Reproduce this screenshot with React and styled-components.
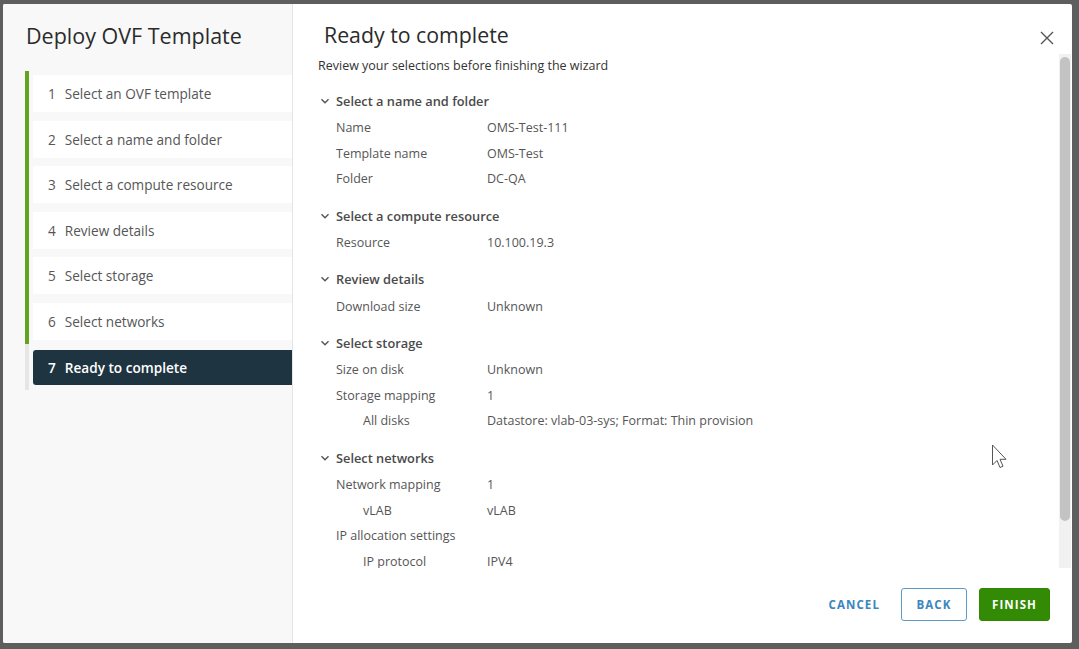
import React from "react";
import styled, { createGlobalStyle } from "styled-components";

const Global = createGlobalStyle`
  html, body { margin: 0; padding: 0; background: #5e5e5e; }
  body { font-family: "Open Sans", "Noto Sans", sans-serif; }
  * { box-sizing: border-box; }
`;

const Page = styled.div`
  width: 1079px;
  height: 649px;
  padding: 4px 7px 6px 3px;
  background: #5e5e5e;
`;

const Modal = styled.div`
  position: relative;
  display: flex;
  width: 100%;
  height: 100%;
  background: #fff;
  border-radius: 2px;
  overflow: hidden;
`;

const Sidebar = styled.aside`
  width: 290px;
  flex: none;
  background: #f8f8f8;
  border-right: 1px solid #e4e4e4;
  padding: 0 0 0 22px;
`;

const SideTitle = styled.h1`
  margin: 0;
  height: 67px;
  padding: 18px 0 0 1px;
  font-size: 21.5px;
  line-height: 28px;
  font-weight: 400;
  color: #2b2b2b;
`;

const StepList = styled.ol`
  list-style: none;
  margin: 0;
  padding: 0;
`;

const StepItem = styled.li`
  display: flex;
  align-items: flex-start;
  height: 45.5px;
  gap: 4px;
`;

const StepBar = styled.span`
  width: 4px;
  align-self: stretch;
  background: ${(p) => (p.$done ? "#62a420" : "#e6e6e6")};
`;

const StepBox = styled.div`
  flex: 1;
  margin-top: ${(p) => (p.$active ? "6px" : "4px")};
  height: ${(p) => (p.$active ? "35px" : "37px")};
  display: flex;
  align-items: center;
  padding-left: 15px;
  gap: 9px;
  background: ${(p) => (p.$active ? "#1f3441" : "#ffffff")};
  border-radius: ${(p) => (p.$active ? "3px 0 0 3px" : "0")};
  color: ${(p) => (p.$active ? "#ffffff" : "#565656")};
  font-size: 13.6px;
  font-weight: ${(p) => (p.$active ? 600 : 400)};
`;

const Main = styled.section`
  flex: 1;
  display: flex;
  flex-direction: column;
  min-width: 0;
`;

const Header = styled.header`
  height: 50px;
  flex: none;
  display: flex;
  align-items: flex-start;
  justify-content: space-between;
  padding: 17px 17px 0 31px;
`;

const Title = styled.h2`
  margin: 0;
  font-size: 21.3px;
  line-height: 28px;
  font-weight: 400;
  color: #2b2b2b;
`;

const CloseButton = styled.button`
  border: 0;
  background: none;
  padding: 0;
  margin-top: 9px;
  width: 16px;
  height: 16px;
  display: flex;
  align-items: center;
  justify-content: center;
`;

const ScrollArea = styled.div`
  flex: 1;
  display: flex;
  min-height: 0;
`;

const ScrollContent = styled.div`
  flex: 1;
  overflow: hidden;
  padding: 4px 0 0 25px;
`;

const Track = styled.div`
  width: 12px;
  flex: none;
  margin-right: 1px;
  background: #f1f1f1;
  padding: 3px 1px 0 1px;
`;

const Thumb = styled.div`
  height: 464px;
  border-radius: 5px;
  background: #c3c3c3;
`;

const Subtitle = styled.p`
  margin: 0 0 15px;
  font-size: 12.5px;
  line-height: 16px;
  color: #333;
`;

const Section = styled.div`
  margin-bottom: 12px;
`;

const SectionHead = styled.div`
  display: flex;
  align-items: center;
  gap: 6px;
  height: 24px;
  margin-bottom: 2px;
  padding-left: 2px;
  font-size: 12.8px;
  font-weight: 600;
  color: #4a4a4a;
`;

const Row = styled.div`
  display: grid;
  grid-template-columns: ${(p) => (p.$sub ? "124px" : "151px")} 1fr;
  height: 25.6px;
  align-items: center;
  padding-left: ${(p) => (p.$sub ? "45px" : "18px")};
  font-size: 12.5px;
  color: #565656;
  white-space: nowrap;
`;

const Footer = styled.footer`
  height: 75px;
  flex: none;
  display: flex;
  justify-content: flex-end;
  align-items: flex-start;
  gap: 12px;
  padding: 20px 22px 0 0;
`;

const Btn = styled.button`
  height: 33px;
  padding: 0 ${(p) => (p.$variant === "flat" ? "5px" : "12px")};
  min-width: ${(p) => (p.$variant === "flat" ? "0" : "66px")};
  margin-right: ${(p) => (p.$variant === "flat" ? "3px" : "0")};
  border-radius: 3px;
  font-family: "Open Sans", "Noto Sans", sans-serif;
  font-size: 11.5px;
  font-weight: 700;
  letter-spacing: 1.1px;
  cursor: pointer;
  border: 1px solid
    ${(p) =>
      p.$variant === "primary" ? "#318700" : p.$variant === "outline" ? "#5b9cc7" : "transparent"};
  background: ${(p) => (p.$variant === "primary" ? "#338a05" : "#fff")};
  color: ${(p) => (p.$variant === "primary" ? "#fff" : "#3a86bd")};
`;

const Cursor = styled.svg`
  position: absolute;
  left: 986px;
  top: 437px;
`;

const Chevron = () => (
  <svg width="10" height="10" viewBox="0 0 10 10" fill="none">
    <path d="M1.5 3.2 L5 6.7 L8.5 3.2" stroke="#555" strokeWidth="1.4" />
  </svg>
);

const steps = [
  "Select an OVF template",
  "Select a name and folder",
  "Select a compute resource",
  "Review details",
  "Select storage",
  "Select networks",
  "Ready to complete",
];

const sections = [
  {
    title: "Select a name and folder",
    rows: [
      ["Name", "OMS-Test-111"],
      ["Template name", "OMS-Test"],
      ["Folder", "DC-QA"],
    ],
  },
  { title: "Select a compute resource", rows: [["Resource", "10.100.19.3"]] },
  { title: "Review details", rows: [["Download size", "Unknown"]] },
  {
    title: "Select storage",
    rows: [
      ["Size on disk", "Unknown"],
      ["Storage mapping", "1"],
      ["All disks", "Datastore: vlab-03-sys; Format: Thin provision", true],
    ],
  },
  {
    title: "Select networks",
    rows: [
      ["Network mapping", "1"],
      ["vLAB", "vLAB", true],
      ["IP allocation settings", ""],
      ["IP protocol", "IPV4", true],
    ],
  },
];

export default function App() {
  return (
    <>
      <Global />
      <Page>
        <Modal>
          <Sidebar>
            <SideTitle>Deploy OVF Template</SideTitle>
            <StepList>
              {steps.map((s, i) => {
                const active = i === steps.length - 1;
                return (
                  <StepItem key={s}>
                    <StepBar $done={!active} />
                    <StepBox $active={active}>
                      <span>{i + 1}</span>
                      <span>{s}</span>
                    </StepBox>
                  </StepItem>
                );
              })}
            </StepList>
          </Sidebar>
          <Main>
            <Header>
              <Title>Ready to complete</Title>
              <CloseButton aria-label="Close">
                <svg width="14" height="14" viewBox="0 0 14 14">
                  <path d="M1 1 L13 13 M13 1 L1 13" stroke="#555" strokeWidth="1.4" />
                </svg>
              </CloseButton>
            </Header>
            <ScrollArea>
              <ScrollContent>
                <Subtitle>Review your selections before finishing the wizard</Subtitle>
                {sections.map((sec) => (
                  <Section key={sec.title}>
                    <SectionHead>
                      <Chevron />
                      <span>{sec.title}</span>
                    </SectionHead>
                    {sec.rows.map(([k, v, sub]) => (
                      <Row key={k} $sub={sub}>
                        <span>{k}</span>
                        <span>{v}</span>
                      </Row>
                    ))}
                  </Section>
                ))}
              </ScrollContent>
              <Track>
                <Thumb />
              </Track>
            </ScrollArea>
            <Footer>
              <Btn $variant="flat">CANCEL</Btn>
              <Btn $variant="outline">BACK</Btn>
              <Btn $variant="primary">FINISH</Btn>
            </Footer>
          </Main>
          <Cursor width="20" height="30" viewBox="0 0 20 30">
            <path
              d="M3.5 4 L3.5 24 L8 19.5 L11 26.5 L14 25.2 L11 18.3 L17 18.3 Z"
              fill="#fff"
              stroke="#555"
              strokeWidth="1"
              strokeLinejoin="round"
            />
          </Cursor>
        </Modal>
      </Page>
    </>
  );
}
